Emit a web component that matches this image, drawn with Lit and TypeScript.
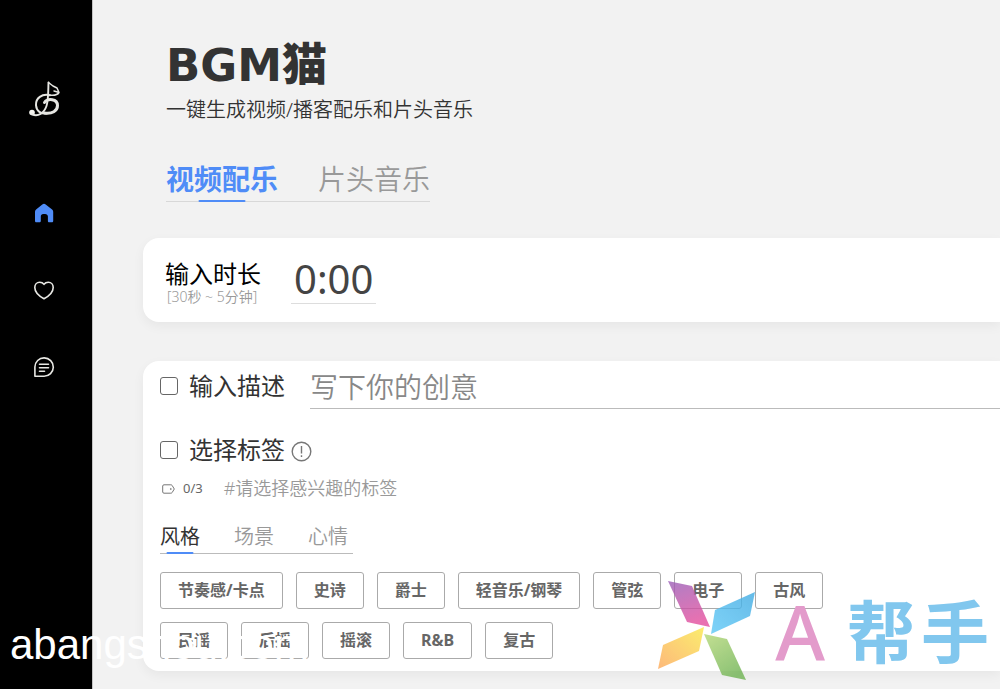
import { LitElement, html, svg, css } from "lit";
import { customElement, state } from "lit/decorators.js";

const TAGS = [
  "节奏感/卡点", "史诗", "爵士", "轻音乐/钢琴", "管弦", "电子", "古风",
  "民谣", "后摇", "摇滚", "R&B", "复古",
];

@customElement("side-nav")
class SideNav extends LitElement {
  static styles = css`
    :host { display: block; background: #000; border-right: 1px solid #c4c4c4; }
    nav { display: flex; flex-direction: column; align-items: center; padding: 78px 4px 0 0; }
    a { display: block; line-height: 0; }
    .logo { margin-bottom: 81px; }
    .item { margin-bottom: 53px; }
  `;
  render() {
    return html`
      <nav aria-label="BGM猫">
        <a class="logo" href="#" aria-label="BGM猫">
          <svg width="44" height="42" viewBox="0 0 44 42" fill="none" stroke="#e6e6e2" stroke-linecap="round" stroke-linejoin="round">
            <circle cx="10" cy="34.500" r="2.800" fill="#f4f4f0" stroke="none" />
            <path stroke-width="1.900" d="M10 36.300c6 2.700 12-1 14.500-8.300 2-6 1.700-16 2-23.500" />
            <path stroke-width="1.500" d="M26.500 4.500l4.500 3.500 4 2 2 4.500c-1.500 2.500-5.500 3.200-10 2.500M32 13l3.500 1" />
            <path stroke-width="2" d="M28 17.300c-8-2-14.500 3-14 10 .5 6 5 8.700 10.500 8.200" />
            <path stroke-width="3" d="M22.500 24.500c3-4.500 13-4 13 3 0 5.500-5.500 8.500-13 7.500" />
          </svg>
        </a>
        <a class="item" href="#home" aria-label="首页">
          <svg width="24" height="24" viewBox="0 0 24 24">
            <path fill="#4f8cf7" d="M10.300 3.500a2.700 2.700 0 0 1 3.400 0l6.400 5c.7.600 1.100 1.300 1.100 2.200V20c0 .8-.6 1.300-1.400 1.300h-2.600c-.8 0-1.300-.5-1.300-1.300v-4.500c0-1.600-1.200-2.500-2.800-2.500h-1.800c-1.600 0-2.500 1-2.500 2.500V20c0 .8-.6 1.300-1.400 1.300H4.400c-.8 0-1.400-.5-1.400-1.300v-9.300c0-.9.4-1.700 1.100-2.200z" />
          </svg>
        </a>
        <a class="item" href="#likes" aria-label="收藏">
          <svg width="24" height="24" viewBox="0 0 24 24" fill="none" stroke="#e8e8e4" stroke-width="1.600" stroke-linejoin="round">
            <path d="M12 20.800C7.500 18.300 2.800 14.300 2.800 9.500c0-3 2-5.200 4.900-5.200 1.800 0 3.300.7 4.300 2 1-1.300 2.500-2 4.300-2 2.900 0 4.900 2.200 4.900 5.200 0 4.800-4.700 8.800-9.200 11.300z" />
          </svg>
        </a>
        <a class="item" href="#feedback" aria-label="反馈">
          <svg width="24" height="24" viewBox="0 0 24 24" fill="none" stroke="#e8e8e4" stroke-width="1.600" stroke-linecap="round" stroke-linejoin="round">
            <path d="M2.900 21.300V12A9.200 9.200 0 1 1 12 21.300z" />
            <path d="M7.500 9.300h9M7.500 12.800h9M7.500 16.200h5" />
          </svg>
        </a>
      </nav>
    `;
  }
}

@customElement("water-mark")
class WaterMark extends LitElement {
  static styles = css`
    :host { position: absolute; inset: auto 0 0 0; height: 112px; pointer-events: none; overflow: hidden; }
    .site {
      position: absolute; left: 10px; bottom: 20px;
      font: 42px/48px "Liberation Sans", sans-serif; color: #fff;
    }
    .brand { position: absolute; right: 11px; bottom: 8px; display: flex; align-items: flex-end; }
    .pinwheel { width: 100px; height: 102px; margin-right: 18px; opacity: 0.8; }
    .letter { padding-bottom: 5px; font: 500 76px/88px "Noto Sans", sans-serif; color: #e39bcb; margin-right: 22px; }
    .name {
      display: flex; gap: 6px; padding-bottom: 12px;
      font: 700 68px/80px "Noto Sans CJK SC", sans-serif; color: #81c7ee;
    }
  `;
  render() {
    return html`
      <span class="site">abangshou.com</span>
      <div class="brand">
        <svg class="pinwheel" viewBox="656 579 100 102">
          <defs>
            <linearGradient id="p" x1="0" y1="0" x2="0.300" y2="1"><stop offset="0" stop-color="#9a5fb8" /><stop offset="1" stop-color="#e34e9e" /></linearGradient>
            <linearGradient id="b" x1="1" y1="0" x2="0" y2="1"><stop offset="0" stop-color="#3faae2" /><stop offset="1" stop-color="#5ec9f8" /></linearGradient>
            <linearGradient id="y" x1="1" y1="0" x2="0" y2="1"><stop offset="0" stop-color="#fbe94a" /><stop offset="1" stop-color="#fda85a" /></linearGradient>
            <linearGradient id="g" x1="0" y1="0" x2="0.600" y2="1"><stop offset="0" stop-color="#b5d878" /><stop offset="1" stop-color="#6fb352" /></linearGradient>
          </defs>
          ${svg`
            <path fill="url(#p)" d="M667 581l24 5 18 41-23-5z" />
            <path fill="url(#b)" d="M754 592l-5 24-39 18 4-24z" />
            <path fill="url(#y)" d="M703 627l-5 24-41 18 5-24z" />
            <path fill="url(#g)" d="M703 634l23 5 19 41-24-5z" />
          `}
        </svg>
        <span class="letter">A</span>
        <span class="name"><span>帮</span><span>手</span></span>
      </div>
    `;
  }
}

@customElement("app-root")
class AppRoot extends LitElement {
  @state() private mode = 0;
  @state() private category = 0;

  static styles = css`
    :host {
      display: grid; grid-template-columns: 93px minmax(0, 1fr); position: relative;
      min-height: 100vh; overflow: hidden; background: #f2f2f2; color: #333;
      font-family: "Noto Sans", "Noto Sans CJK SC", sans-serif;
    }
    * { box-sizing: border-box; }
    button, input { font: inherit; color: inherit; }
    button { background: none; border: 0; padding: 0; cursor: pointer; }
    main { padding: 36px 0 18px 50px; }
    header { padding-left: 23px; }
    h1 {
      margin: 0; font: 900 45px/60px "DejaVu Sans", "Noto Sans CJK SC", sans-serif; color: #333;
    }
    .subtitle { margin: 0 0 36px; font-size: 20px; line-height: 28px; font-weight: 350; }
    .tabs { display: inline-flex; vertical-align: top; }
    .tabs button { position: relative; color: #999; }
    .tabs button::after {
      position: absolute; bottom: -1px; left: 50%; height: 2px; border-radius: 1px;
      transform: translateX(-50%); background: #4f8cf7;
    }
    .tabs button.on::after { content: ""; }
    .modes { gap: 40px; border-bottom: 1px solid #d8d8d8; font-size: 28px; line-height: 39px; font-weight: 350; }
    .modes button { padding-bottom: 2px; }
    .modes button.on { color: #4f8cf7; font-weight: 700; }
    .modes button::after { width: 47px; }
    .card { background: #fff; border-radius: 16px 0 0 16px; box-shadow: 0 4px 12px rgba(0, 0, 0, 0.050); }
    .duration { display: flex; align-items: flex-start; gap: 30px; margin-top: 36px; padding: 20px 22px 18px; }
    .duration label { display: grid; color: #000; font-size: 24px; line-height: 32px; }
    .hint { padding-left: 2px; font-size: 14px; line-height: 14px; color: #999; font-weight: 350; }
    .time {
      width: 85px; height: 46px; padding: 0 0 4px 3px; border: 0; border-bottom: 1px solid #ddd;
      background: none; outline: 0; font-size: 40px; line-height: 41px; color: #444;
    }
    .create { margin-top: 39px; padding: 4px 0 12px 17px; }
    .row { display: flex; align-items: center; }
    .row label { display: flex; align-items: center; gap: 11px; padding-bottom: 2px; font-size: 24px; line-height: 32px; }
    .check {
      appearance: none; width: 18px; height: 18px; margin: 0; border: 1px solid #666;
      border-radius: 3px; background: #fff;
    }
    .check:checked { background: #4f8cf7; border-color: #4f8cf7; }
    .idea {
      flex: 1; min-width: 0; height: 44px; margin-left: 25px; padding: 0; border: 0; outline: 0;
      border-bottom: 1px solid #bbb; background: none; font-size: 28px; font-weight: 350;
    }
    .idea::placeholder { color: #888; opacity: 1; }
    .pick { margin-top: 25px; }
    .info { margin-left: 6px; line-height: 0; }
    .chosen { display: flex; align-items: center; margin-top: 8px; line-height: 24px; color: #666; font-size: 13px; }
    .chosen svg { margin: 2px 8px 0 2px; }
    .placeholder { margin-left: 21px; font-size: 18px; color: #999; font-weight: 350; }
    .cats {
      gap: 34px; margin-top: 21px; padding-right: 5px; border-bottom: 1px solid #bbb;
      font-size: 20px; line-height: 32px; font-weight: 350;
    }
    .cats button.on { color: #333; font-weight: 400; }
    .cats button::after { width: 27px; }
    .tags { display: flex; flex-wrap: wrap; gap: 13px; max-width: 700px; margin-top: 18px; }
    .tags button {
      height: 37px; padding: 0 17px; border: 1px solid #aaa; border-radius: 3px;
      font-size: 16px; line-height: 35px; font-weight: 700; color: #666;
    }
  `;

  private tabs(kind: string, names: string[], current: number, pick: (i: number) => void) {
    return html`<div class="tabs ${kind}" role="tablist">
      ${names.map((n, i) => html`<button role="tab" aria-selected=${i === current} class=${i === current ? "on" : ""}
        @click=${() => pick(i)}>${n}</button>`)}
    </div>`;
  }

  render() {
    return html`
      <side-nav></side-nav>
      <main>
        <header>
          <h1>BGM猫</h1>
          <p class="subtitle">一键生成视频/播客配乐和片头音乐</p>
          ${this.tabs("modes", ["视频配乐", "片头音乐"], this.mode, (i) => (this.mode = i))}
        </header>
        <section class="card duration">
          <label for="time">输入时长<span class="hint">[30秒 ~ 5分钟]</span></label>
          <input id="time" class="time" value="0:00" />
        </section>
        <section class="card create">
          <div class="row">
            <label><input class="check" type="checkbox" />输入描述</label>
            <input class="idea" aria-label="输入描述" placeholder="写下你的创意" />
          </div>
          <div class="row pick">
            <label><input class="check" type="checkbox" />选择标签</label>
            <button class="info" aria-label="说明">
              <svg width="21" height="21" viewBox="0 0 21 21" fill="none" stroke="#777" stroke-width="1.400">
                <circle cx="10.500" cy="10.500" r="9.300" /><path d="M10.500 5v7.500M10.500 14.200v1.800" />
              </svg>
            </button>
          </div>
          <div class="chosen">
            <svg width="13" height="10" viewBox="0 0 13 10" fill="none" stroke="#777">
              <path d="M2 .8h6.800c.6 0 1 .2 1.300.6L12.300 5l-2.200 3.600c-.3.400-.7.600-1.300.6H2C1.200 9.200.7 8.700.7 8V2C.7 1.300 1.200.8 2 .8z" />
              <circle cx="8.800" cy="5" r=".5" />
            </svg>
            <span>0/3</span>
            <span class="placeholder">#请选择感兴趣的标签</span>
          </div>
          ${this.tabs("cats", ["风格", "场景", "心情"], this.category, (i) => (this.category = i))}
          <div class="tags">${TAGS.map((t) => html`<button>${t}</button>`)}</div>
        </section>
      </main>
      <water-mark></water-mark>
    `;
  }
}
